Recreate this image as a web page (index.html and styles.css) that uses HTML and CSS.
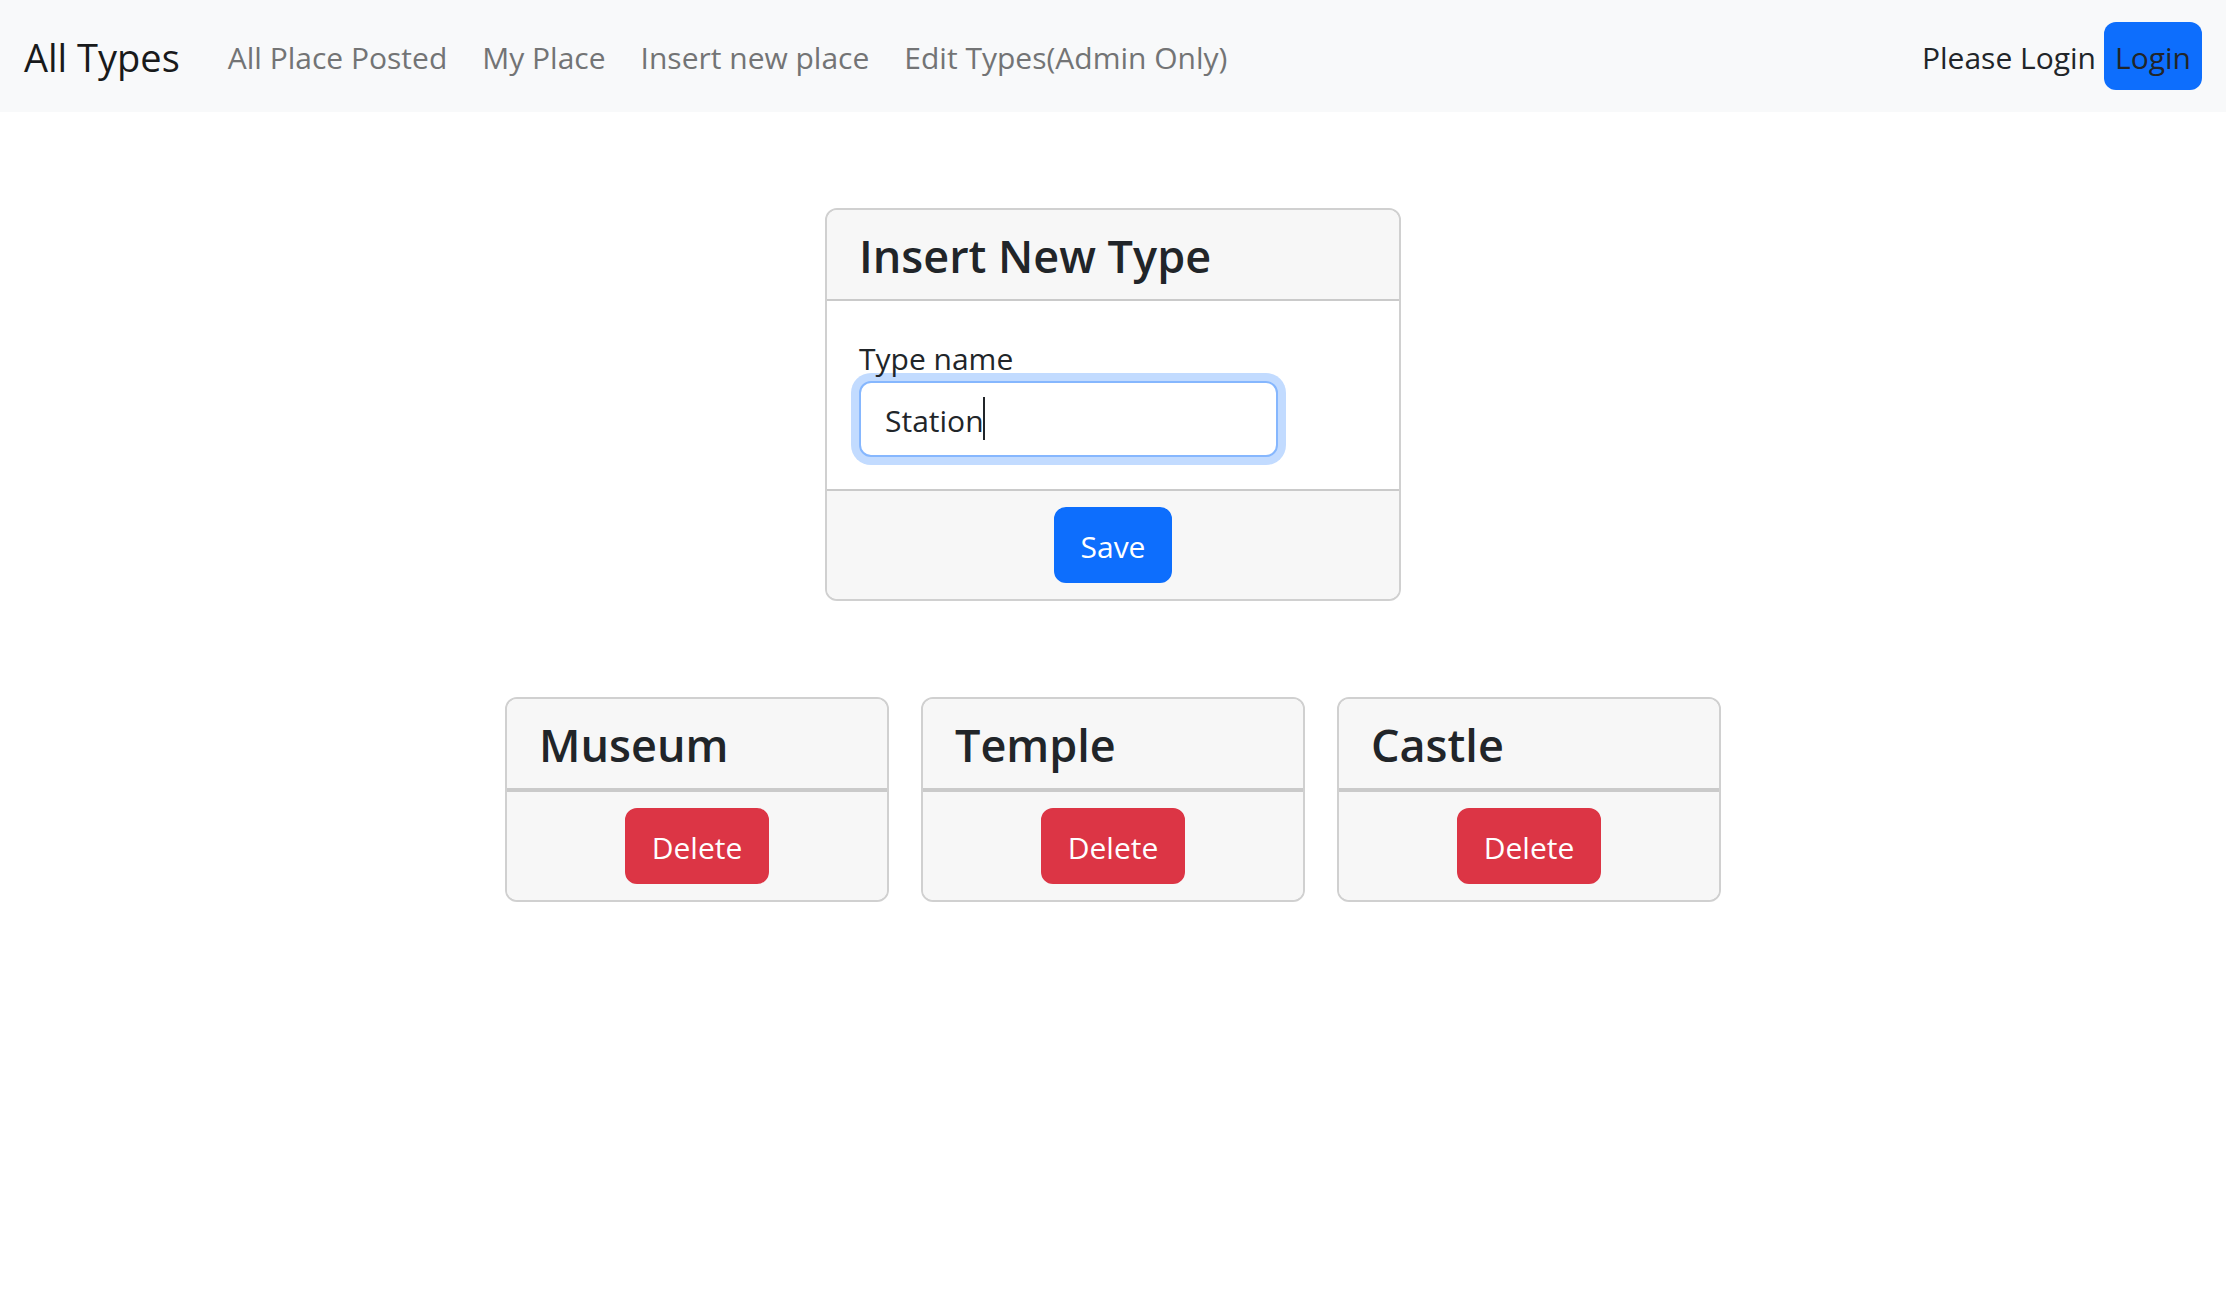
FILE: index.html
```html
<!DOCTYPE html>
<html lang="en">
<head>
<meta charset="utf-8">
<meta name="viewport" content="width=device-width, initial-scale=1">
<title>All Types</title>
<link rel="stylesheet" href="styles.css">
</head>
<body>
<header class="navbar">
  <a class="brand" href="#">All Types</a>
  <nav class="nav-links">
    <a href="#">All Place Posted</a>
    <a href="#">My Place</a>
    <a href="#">Insert new place</a>
    <a href="#">Edit Types(Admin Only)</a>
  </nav>
  <div class="account">
    <span class="account-text">Please Login</span>
    <button class="login" type="button">Login</button>
  </div>
</header>
<main class="content">
  <form class="card card-form">
    <div class="card-header"><h2>Insert New Type</h2></div>
    <div class="card-body">
      <label for="type-name">Type name</label>
      <div class="field">
        <input class="text-input" id="type-name" type="text" value="Station" autofocus>
        <span class="caret" aria-hidden="true"></span>
      </div>
    </div>
    <div class="card-footer"><button class="btn btn-primary" type="button">Save</button></div>
  </form>
  <section class="type-list">
    <article class="card">
      <div class="card-header"><h2>Museum</h2></div>
      <div class="card-footer"><button class="btn btn-danger" type="button">Delete</button></div>
    </article>
    <article class="card">
      <div class="card-header"><h2>Temple</h2></div>
      <div class="card-footer"><button class="btn btn-danger" type="button">Delete</button></div>
    </article>
    <article class="card">
      <div class="card-header"><h2>Castle</h2></div>
      <div class="card-footer"><button class="btn btn-danger" type="button">Delete</button></div>
    </article>
  </section>
</main>
</body>
</html>
```
FILE: styles.css
```css
* { box-sizing: border-box; }

body {
  margin: 0;
  background: #fff;
  color: #212529;
  font-family: "Open Sans", "Noto Sans", sans-serif;
  font-size: 30px;
  line-height: 48px;
}

button, input { font: inherit; color: inherit; }

.navbar {
  display: flex;
  flex-wrap: wrap;
  align-items: center;
  min-height: 112px;
  padding: 16px 24px;
  background: #f8f9fa;
}

.brand {
  margin-right: 48px;
  padding-top: 2px;
  color: #181a1b;
  font-size: 38px;
  text-decoration: none;
}

.nav-links { display: flex; flex-wrap: wrap; gap: 35px; padding-top: 4px; }
.nav-links a { color: #737475; text-decoration: none; }

.account {
  display: flex;
  align-items: center;
  gap: 8px;
  margin-left: auto;
}

.account-text { padding-top: 4px; }

.login {
  padding: 12px 11px 8px;
  border: 0;
  border-radius: 12px;
  background: #0d6efd;
}

.content {
  display: flex;
  flex-direction: column;
  align-items: center;
  gap: 96px;
  padding: 96px 24px;
}

.card {
  width: 384px;
  max-width: 100%;
  border: 2px solid #d0d0d0;
  border-radius: 12px;
  overflow: hidden;
  background: #fff;
}

.card-form { width: 576px; }

.card-header {
  padding: 17px 32px 15px;
  border-bottom: 2px solid #cacaca;
  background: #f7f7f7;
}

.card-header h2 {
  margin: 0;
  font-size: 45px;
  font-weight: 600;
  line-height: 57px;
}

.card-body { padding: 36px 32px 32px; }

.card-body label {
  display: block;
  position: relative;
  z-index: 1;
  line-height: 44px;
}

.field { position: relative; }

.text-input {
  display: block;
  width: 419px;
  max-width: 100%;
  height: 76px;
  padding: 13px 24px 11px;
  border: 2px solid #86b7fe;
  border-radius: 12px;
  outline: 0;
  background: #fff;
  box-shadow: 0 0 0 8px #c2dbff;
  caret-color: transparent;
}

.caret {
  position: absolute;
  top: 16px;
  left: 124px;
  width: 2px;
  height: 43px;
  background: #212529;
}

.card-footer {
  padding: 16px 32px;
  border-top: 2px solid #cacaca;
  background: #f7f7f7;
  text-align: center;
}

.btn {
  display: block;
  margin: 0 auto;
  padding: 14px 25px 10px;
  border: 2px solid transparent;
  border-radius: 12px;
  color: #fff;
}

.btn-primary { border-color: #0d6efd; background: #0d6efd; }
.btn-danger { border-color: #dc3545; background: #dc3545; }

.type-list { display: flex; flex-wrap: wrap; justify-content: center; gap: 32px; }
```
